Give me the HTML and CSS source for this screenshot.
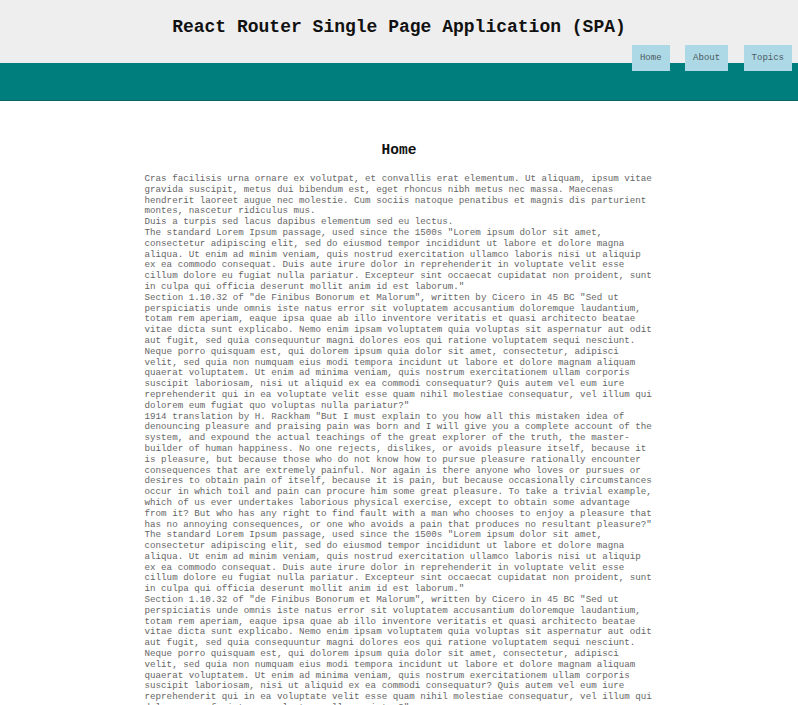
FILE: index.html
```html
<!DOCTYPE html>
<html lang="en">
<head>
<meta charset="utf-8">
<title>React Router Single Page Application (SPA)</title>
<link rel="stylesheet" href="styles.css">
</head>
<body>
<header class="top">
  <h1 class="title">React Router Single Page Application (SPA)</h1>
</header>
<nav class="band">
  <a class="nav-link" href="#">Home</a>
  <a class="nav-link" href="#">About</a>
  <a class="nav-link" href="#">Topics</a>
</nav>
<main class="content">
  <h2 class="page-title">Home</h2>
  <div class="text">
    <p>Cras facilisis urna ornare ex volutpat, et convallis erat elementum. Ut aliquam, ipsum vitae gravida suscipit, metus dui bibendum est, eget rhoncus nibh metus nec massa. Maecenas hendrerit laoreet augue nec molestie. Cum sociis natoque penatibus et magnis dis parturient montes, nascetur ridiculus mus.</p>
    <p>Duis a turpis sed lacus dapibus elementum sed eu lectus.</p>
    <p>The standard Lorem Ipsum passage, used since the 1500s "Lorem ipsum dolor sit amet, consectetur adipiscing elit, sed do eiusmod tempor incididunt ut labore et dolore magna aliqua. Ut enim ad minim veniam, quis nostrud exercitation ullamco laboris nisi ut aliquip ex ea commodo consequat. Duis aute irure dolor in reprehenderit in voluptate velit esse cillum dolore eu fugiat nulla pariatur. Excepteur sint occaecat cupidatat non proident, sunt in culpa qui officia deserunt mollit anim id est laborum."</p>
    <p>Section 1.10.32 of "de Finibus Bonorum et Malorum", written by Cicero in 45 BC "Sed ut perspiciatis unde omnis iste natus error sit voluptatem accusantium doloremque laudantium, totam rem aperiam, eaque ipsa quae ab illo inventore veritatis et quasi architecto beatae vitae dicta sunt explicabo. Nemo enim ipsam voluptatem quia voluptas sit aspernatur aut odit aut fugit, sed quia consequuntur magni dolores eos qui ratione voluptatem sequi nesciunt. Neque porro quisquam est, qui dolorem ipsum quia dolor sit amet, consectetur, adipisci velit, sed quia non numquam eius modi tempora incidunt ut labore et dolore magnam aliquam quaerat voluptatem. Ut enim ad minima veniam, quis nostrum exercitationem ullam corporis suscipit laboriosam, nisi ut aliquid ex ea commodi consequatur? Quis autem vel eum iure reprehenderit qui in ea voluptate velit esse quam nihil molestiae consequatur, vel illum qui dolorem eum fugiat quo voluptas nulla pariatur?"</p>
    <p>1914 translation by H. Rackham "But I must explain to you how all this mistaken idea of denouncing pleasure and praising pain was born and I will give you a complete account of the system, and expound the actual teachings of the great explorer of the truth, the master-builder of human happiness. No one rejects, dislikes, or avoids pleasure itself, because it is pleasure, but because those who do not know how to pursue pleasure rationally encounter consequences that are extremely painful. Nor again is there anyone who loves or pursues or desires to obtain pain of itself, because it is pain, but because occasionally circumstances occur in which toil and pain can procure him some great pleasure. To take a trivial example, which of us ever undertakes laborious physical exercise, except to obtain some advantage from it? But who has any right to find fault with a man who chooses to enjoy a pleasure that has no annoying consequences, or one who avoids a pain that produces no resultant pleasure?"</p>
    <p>The standard Lorem Ipsum passage, used since the 1500s "Lorem ipsum dolor sit amet, consectetur adipiscing elit, sed do eiusmod tempor incididunt ut labore et dolore magna aliqua. Ut enim ad minim veniam, quis nostrud exercitation ullamco laboris nisi ut aliquip ex ea commodo consequat. Duis aute irure dolor in reprehenderit in voluptate velit esse cillum dolore eu fugiat nulla pariatur. Excepteur sint occaecat cupidatat non proident, sunt in culpa qui officia deserunt mollit anim id est laborum."</p>
    <p>Section 1.10.32 of "de Finibus Bonorum et Malorum", written by Cicero in 45 BC "Sed ut perspiciatis unde omnis iste natus error sit voluptatem accusantium doloremque laudantium, totam rem aperiam, eaque ipsa quae ab illo inventore veritatis et quasi architecto beatae vitae dicta sunt explicabo. Nemo enim ipsam voluptatem quia voluptas sit aspernatur aut odit aut fugit, sed quia consequuntur magni dolores eos qui ratione voluptatem sequi nesciunt. Neque porro quisquam est, qui dolorem ipsum quia dolor sit amet, consectetur, adipisci velit, sed quia non numquam eius modi tempora incidunt ut labore et dolore magnam aliquam quaerat voluptatem. Ut enim ad minima veniam, quis nostrum exercitationem ullam corporis suscipit laboriosam, nisi ut aliquid ex ea commodi consequatur? Quis autem vel eum iure reprehenderit qui in ea voluptate velit esse quam nihil molestiae consequatur, vel illum qui dolorem eum fugiat quo voluptas nulla pariatur?"</p>
    <p>1914 translation by H. Rackham "But I must explain to you how all this mistaken idea of denouncing pleasure and praising pain was born and I will give you a complete account of the system, and expound the actual teachings of the great explorer of the truth, the master-builder of human happiness. No one rejects, dislikes, or avoids pleasure itself, because it is pleasure, but because those who do not know how to pursue pleasure rationally encounter consequences that are extremely painful."</p>
  </div>
</main>
</body>
</html>
```

FILE: styles.css
```css
html, body {
  margin: 0;
  padding: 0;
  background: #ffffff;
  font-family: "Liberation Mono", "Courier New", monospace;
}

.top {
  background: #efeeee;
  height: 63px;
  box-sizing: border-box;
  padding-top: 16px;
}

.title {
  margin: 0;
  text-align: center;
  font-size: 18px;
  line-height: 22px;
  font-weight: bold;
  color: #111111;
}

.band {
  background: #007e7e;
  height: 37px;
  border-bottom: 1px solid #0b6464;
  display: flex;
  justify-content: flex-end;
  align-items: flex-start;
  gap: 15.5px;
  padding-right: 6px;
}

.nav-link {
  margin-top: -18px;
  height: 26px;
  padding: 0 8px;
  display: flex;
  align-items: center;
  background: #add8e6;
  color: #4a5a60;
  font-size: 9px;
  text-decoration: none;
}

.content {
  width: 92.3ch;
  font-size: 9.2px;
  margin: 0 auto;
  padding-top: 40px;
}

.page-title {
  margin: 0 0 15px 0;
  text-align: center;
  font-size: 14.5px;
  line-height: 18px;
  font-weight: bold;
  color: #111111;
}

.text p {
  margin: 0;
  line-height: 10.8px;
  color: #666666;
}
```
